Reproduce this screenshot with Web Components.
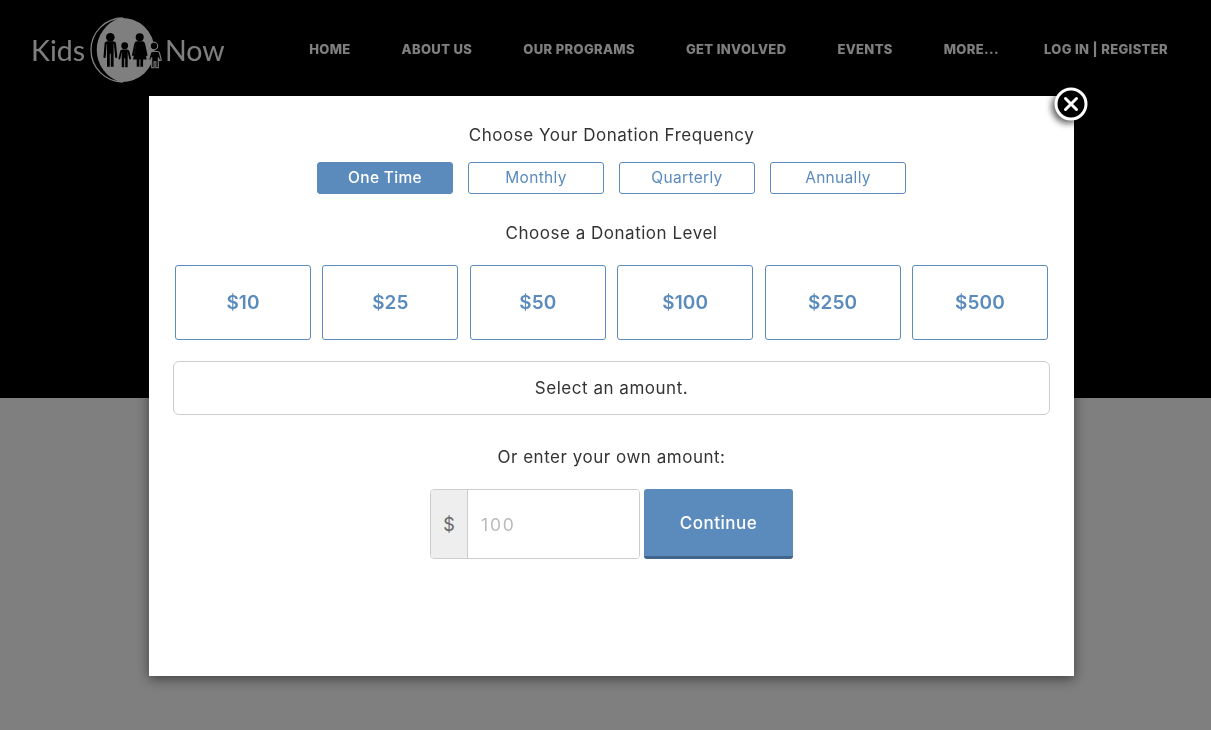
<!DOCTYPE html>
<html lang="en">
<head>
<meta charset="utf-8">
<title>Kids Now</title>
<style>
  html, body { margin: 0; height: 100%; }
  body { background: #fff; font-family: "Inter", "Liberation Sans", sans-serif; overflow: hidden; }
</style>
</head>
<body>
<site-header></site-header>
<donation-modal></donation-modal>

<script>
class SiteHeader extends HTMLElement {
  constructor() {
    super();
    this.shadowDOM = this.attachShadow({ mode: 'open' });
    this.render();
  }

  render() {
    const links = ['HOME', 'ABOUT US', 'OUR PROGRAMS', 'GET INVOLVED', 'EVENTS', 'MORE...', 'LOG IN | REGISTER'];
    this.shadowDOM.innerHTML = `
      <style>
        :host { display: block; height: 398px; background: #000; color: #fff; }
        header { display: flex; align-items: center; justify-content: space-between; height: 100px; padding: 0 43px 0 31px; }
        .logo { display: flex; align-items: center; gap: 4px; font: 400 28.500px "Lato", sans-serif; will-change: opacity; }
        .logo svg { display: block; margin-right: -1px; }
        nav { display: flex; gap: 51px; padding-bottom: 2px; will-change: opacity; }
        nav a { font-size: 13px; font-weight: 800; letter-spacing: .36px; white-space: nowrap; }
        nav a:last-child { margin-left: -6px; }
      </style>
      <header>
        <div class="logo">
          <span>Kids</span>
          <svg width="73" height="66" viewBox="0 0 73 66" aria-hidden="true">
            <path d="M34 1A32 32 0 1 0 34 65A34 34 0 0 1 34 1z" fill="none" stroke="#fff" stroke-width="1.300"/>
            <path d="M31 1.100A33.500 33.500 0 0 0 31 64.900A32 32 0 1 0 31 1.100z" fill="#fff"/>
            <g fill="#000">
              <circle cx="21.300" cy="20.300" r="4.300"/>
              <path d="M18 25h6.600v24.700h-2.800v-13h-1v13h-2.800z"/>
              <circle cx="35.700" cy="28.700" r="3.400"/>
              <path d="M32.700 33h6v17.300h-2.500v-9h-1v9h-2.500z"/>
              <circle cx="50.700" cy="20.300" r="4"/>
              <path d="M47.500 25h6.400l1.800 7l2 10.500h-3.600v7.200h-2.700v-7.200h-1v7.200h-2.700v-7.200h-3.600l2-10.500z"/>
            </g>
            <g fill="none" stroke="#000" stroke-linecap="round">
              <path d="M15.600 40L16.600 27Q16.800 25.300 18.500 25.300H24Q25.800 25.300 26 27L27.200 40" stroke-width="2.200"/>
              <path d="M30.400 41.500L32 34.500Q32.300 33.300 33.500 33.300H38Q39.200 33.300 39.500 34.500L41.100 41.500" stroke-width="1.800"/>
              <path d="M44 38L46.300 27Q46.700 25.300 48.300 25.300H53Q54.700 25.300 55.100 27L57.500 38" stroke-width="2"/>
            </g>
            <g fill="#000" stroke="#fff" stroke-width="1.100">
              <circle cx="65" cy="29" r="3.700"/>
              <path d="M61.500 34.500h7q1.500 0 2 1.500l1.800 7-1.800.5-1.200-3v10.200h-2.400v-6h-1.800v6h-2.400v-10.200l-1.200 3-1.800-.5 1.800-7q.5-1.500 2-1.500z"/>
            </g>
          </svg>
          <span>Now</span>
        </div>
        <nav>${links.map((l) => `<a>${l}</a>`).join('')}</nav>
      </header>
    `;
  }
}

class ChoiceButton extends HTMLElement {
  constructor() {
    super();
    this.shadowDOM = this.attachShadow({ mode: 'open' });
    this.shadowDOM.innerHTML = `
      <style>
        :host {
          display: flex; align-items: center; justify-content: center; box-sizing: border-box;
          width: 136px; height: 32px; border: 1px solid #5b8bbd; border-radius: 3px;
          background: #fff; color: #5b8bbd; font-size: 15.500px; font-weight: 400; letter-spacing: .32px;
          padding-bottom: 1px;
        }
        :host([active]) { background: #5b8bbd; color: #fff; font-weight: 500; }
        :host([big]) { height: 75px; font-size: 19px; font-weight: 600; letter-spacing: .1px; }
        span { will-change: opacity; }
      </style>
      <span><slot></slot></span>
    `;
  }
}

class DonationModal extends HTMLElement {
  constructor() {
    super();
    this.shadowDOM = this.attachShadow({ mode: 'open' });
    this.render();
  }

  render() {
    const freqs = ['One Time', 'Monthly', 'Quarterly', 'Annually'];
    const levels = ['$10', '$25', '$50', '$100', '$250', '$500'];
    this.shadowDOM.innerHTML = `
      <style>
        :host { position: fixed; inset: 0; display: block; background: rgba(0, 0, 0, .5); }
        .modal {
          position: relative; box-sizing: border-box; width: 925px; height: 580px; margin: 96px 0 0 149px;
          padding: 28px 24px 0; background: #fff; box-shadow: 0 3px 12px rgba(0, 0, 0, .5);
          color: #333; display: flex; flex-direction: column; align-items: center;
        }
        p { margin: 0; font-size: 17px; line-height: 22px; letter-spacing: .52px; text-align: center; will-change: opacity; }
        .close { position: absolute; top: -9px; right: -14px; filter: drop-shadow(-3px 3px 3px rgba(0, 0, 0, .6)); display: block; }
        .freqs { display: flex; gap: 15px; margin-top: 16px; }
        .levels { display: flex; justify-content: space-between; align-self: stretch; margin: 21px 2px 0; }
        .heading2 { margin-top: 28px; }
        .notice {
          align-self: stretch; box-sizing: border-box; height: 54px; margin-top: 21px;
          border: 1px solid #ccc; border-radius: 6px;
          display: flex; align-items: center; justify-content: center;
        }
        .own { margin-top: 31px; }
        .amount { display: flex; gap: 4px; margin-top: 21px; height: 70px; }
        .group { display: flex; width: 210px; box-sizing: border-box; border: 1px solid #ccc; border-radius: 4px; overflow: hidden; }
        .addon { width: 36px; flex: none; background: #eee; border-right: 1px solid #ccc; color: #666; font-size: 18px; display: flex; align-items: center; justify-content: center; }
        input { flex: 1; min-width: 0; border: 0; outline: 0; padding: 0 13px; font: 17.500px "Inter", sans-serif; letter-spacing: 1.800px; color: #555; }
        input::placeholder { color: #bbb; opacity: 1; }
        .continue {
          width: 149px; box-sizing: border-box; border: 0; border-bottom: 3px solid #41648c; border-radius: 3px;
          background: #5b8bbd; color: #fff; font: 500 17px "Inter", sans-serif; letter-spacing: .5px; padding: 0;
        }
        .continue span { display: block; will-change: opacity; }
      </style>
      <section class="modal">
        <svg class="close" width="34" height="34" viewBox="0 0 34 34" aria-hidden="true">
          <circle cx="17" cy="17" r="15" fill="#000" stroke="#fff" stroke-width="3"/>
          <path d="M11.500 11.500l11 11M22.500 11.500l-11 11" stroke="#fff" stroke-width="3" stroke-linecap="round"/>
        </svg>
        <p>Choose Your Donation Frequency</p>
        <div class="freqs">
          ${freqs.map((f, i) => `<choice-button ${i === 0 ? 'active' : ''}>${f}</choice-button>`).join('')}
        </div>
        <p class="heading2">Choose a Donation Level</p>
        <div class="levels">
          ${levels.map((l) => `<choice-button big>${l}</choice-button>`).join('')}
        </div>
        <div class="notice"><p>Select an amount.</p></div>
        <p class="own">Or enter your own amount:</p>
        <div class="amount">
          <div class="group">
            <span class="addon">$</span>
            <input type="text" placeholder="100">
          </div>
          <button class="continue"><span>Continue</span></button>
        </div>
      </section>
    `;
  }
}

customElements.define('site-header', SiteHeader);
customElements.define('choice-button', ChoiceButton);
customElements.define('donation-modal', DonationModal);
</script>
</body>
</html>
